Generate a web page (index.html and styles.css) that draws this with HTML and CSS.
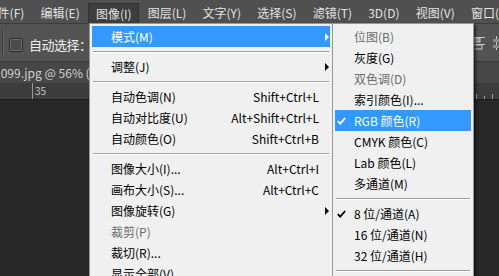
FILE: index.html
```html
<!DOCTYPE html>
<html lang="zh-CN">
<head>
  <meta charset="UTF-8">
  <meta name="viewport" content="width=device-width, initial-scale=1.0">
  <title>Photoshop - 图像菜单</title>
  <link rel="stylesheet" href="styles.css">
</head>
<body>
  <div class="ps">
    <div class="menubar">
      <span class="mb-item first">文件(F)</span>
      <span class="mb-item">编辑(E)</span>
      <span class="mb-item active">图像(I)</span>
      <span class="mb-item">图层(L)</span>
      <span class="mb-item">文字(Y)</span>
      <span class="mb-item">选择(S)</span>
      <span class="mb-item">滤镜(T)</span>
      <span class="mb-item">3D(D)</span>
      <span class="mb-item">视图(V)</span>
      <span class="mb-item">窗口(W)</span>
    </div>

    <div class="options">
      <span class="opt-sep"></span>
      <span class="check-box"></span>
      <span class="opt-label">自动选择：</span>
      <svg class="align-icons" width="30" height="16" viewBox="0 0 30 16">
        <rect x="0" y="1" width="16" height="1" fill="#c8c8c8"/>
        <rect x="4" y="2" width="7" height="4" fill="#8a8a8a"/>
        <rect x="4" y="2" width="7" height="4" fill="none" stroke="#c8c8c8" stroke-width="1"/>
        <rect x="0" y="8" width="16" height="1" fill="#c8c8c8"/>
        <rect x="4" y="9" width="9" height="4" fill="none" stroke="#c8c8c8" stroke-width="1"/>
        <rect x="27" y="0" width="1" height="14" fill="#c8c8c8"/>
        <rect x="24" y="3" width="6" height="3" fill="#8a8a8a"/>
        <rect x="24" y="9" width="6" height="3" fill="#8a8a8a"/>
      </svg>
    </div>

    <div class="doc-tab">
      <span class="doc-name">1099.jpg @ 56% (</span>
    </div>

    <div class="ruler">
      <svg class="ruler-ticks" width="499" height="16" viewBox="0 0 499 16">
        <rect x="32" y="0" width="1" height="16" fill="#9a9a9a"/>
        <rect x="476" y="11" width="1" height="5" fill="#9a9a9a"/>
        <rect x="484" y="13" width="1" height="3" fill="#9a9a9a"/>
        <rect x="492" y="11" width="1" height="5" fill="#9a9a9a"/>
      </svg>
      <span class="ruler-num">35</span>
    </div>

    <div class="pasteboard"></div>

    <ul class="menu main-menu">
      <li class="item hl"><span class="label">模式(M)</span><span class="arrow"></span></li>
      <li class="sep"></li>
      <li class="item"><span class="label">调整(J)</span><span class="arrow"></span></li>
      <li class="sep"></li>
      <li class="item"><span class="label">自动色调(N)</span><span class="key">Shift+Ctrl+L</span></li>
      <li class="item"><span class="label">自动对比度(U)</span><span class="key">Alt+Shift+Ctrl+L</span></li>
      <li class="item"><span class="label">自动颜色(O)</span><span class="key">Shift+Ctrl+B</span></li>
      <li class="sep"></li>
      <li class="item"><span class="label">图像大小(I)...</span><span class="key">Alt+Ctrl+I</span></li>
      <li class="item"><span class="label">画布大小(S)...</span><span class="key">Alt+Ctrl+C</span></li>
      <li class="item"><span class="label">图像旋转(G)</span><span class="arrow"></span></li>
      <li class="item off"><span class="label">裁剪(P)</span></li>
      <li class="item"><span class="label">裁切(R)...</span></li>
      <li class="item"><span class="label">显示全部(V)</span></li>
    </ul>

    <ul class="menu sub-menu">
      <li class="item off"><span class="label">位图(B)</span></li>
      <li class="item"><span class="label">灰度(G)</span></li>
      <li class="item off"><span class="label">双色调(D)</span></li>
      <li class="item"><span class="label">索引颜色(I)...</span></li>
      <li class="item hl">
        <svg class="tick" width="9" height="8" viewBox="0 0 9 8"><path d="M0.8 4.2 L3.2 6.6 L8.2 1" fill="none" stroke="currentColor" stroke-width="1.8"/></svg>
        <span class="label">RGB 颜色(R)</span>
      </li>
      <li class="item"><span class="label">CMYK 颜色(C)</span></li>
      <li class="item"><span class="label">Lab 颜色(L)</span></li>
      <li class="item"><span class="label">多通道(M)</span></li>
      <li class="sep"></li>
      <li class="item">
        <svg class="tick" width="9" height="8" viewBox="0 0 9 8"><path d="M0.8 4.2 L3.2 6.6 L8.2 1" fill="none" stroke="currentColor" stroke-width="1.8"/></svg>
        <span class="label">8 位/通道(A)</span>
      </li>
      <li class="item"><span class="label">16 位/通道(N)</span></li>
      <li class="item"><span class="label">32 位/通道(H)</span></li>
      <li class="sep"></li>
      <li class="item"><span class="label">颜色表(T)...</span></li>
    </ul>
  </div>
</body>
</html>
```

FILE: styles.css
```css
body {
  margin: 0;
  padding: 0;
  background: #282828;
  font-family: "Noto Sans CJK SC", "Noto Sans", sans-serif;
  font-size: 12px;
}

.ps {
  position: relative;
  width: 499px;
  height: 276px;
  overflow: hidden;
  display: flex;
  flex-direction: column;
}

/* top menu bar */
.menubar {
  height: 23px;
  padding-top: 3px;
  box-sizing: border-box;
  background: #505050;
  display: flex;
  gap: 1px;
  margin-left: -22px;
  white-space: nowrap;
}

.mb-item {
  height: 20px;
  line-height: 20px;
  padding: 0 7.6px;
  color: #e2e2e2;
  box-sizing: border-box;
}

.mb-item.active {
  background: #3e3e3e;
  border: 1px solid #333;
  border-bottom: none;
  line-height: 19px;
  padding: 0 6.6px;
}

/* options bar */
.options {
  height: 39px;
  background: #535353;
  border-top: 1px solid #3c3c3c;
  border-bottom: 1px solid #383838;
  box-sizing: border-box;
  display: flex;
  align-items: center;
}

.opt-sep {
  width: 1px;
  height: 24px;
  margin-left: 2px;
  background: #3a3a3a;
  border-right: 1px solid #666;
}

.check-box {
  width: 12px;
  height: 12px;
  margin: 4px 0 0 5px;
  border: 1px solid #2c2c2c;
  border-radius: 2px;
  background: #4b4b4b;
  box-shadow: inset 0 0 0 1px #6a6a6a;
}

.opt-label {
  margin: 3px 0 0 6px;
  color: #f0f0f0;
  font-size: 13px;
  letter-spacing: -0.5px;
}

.align-icons {
  margin: 2px 0 0 auto;
}

/* document tab */
.doc-tab {
  height: 21px;
  background: #474747;
  color: #d0d0d0;
  line-height: 21px;
  white-space: nowrap;
  overflow: hidden;
}

.doc-name {
  margin-left: -6px;
}

/* ruler */
.ruler {
  position: relative;
  height: 16px;
  background: #3c3c3c;
  border-bottom: 1px solid #1c1c1c;
}

.ruler-ticks {
  display: block;
}

.ruler-num {
  position: absolute;
  left: 35px;
  top: 2px;
  font-size: 10px;
  line-height: 12px;
  color: #c4c4c4;
}

.pasteboard {
  flex: 1;
  background: #282828;
}

/* dropdown menus */
.menu {
  position: absolute;
  top: 23px;
  margin: 0;
  padding: 2px;
  list-style: none;
  background: #f0f0f0;
  border: 1px solid #979797;
  box-shadow: 2px 2px 2px rgba(0, 0, 0, 0.55);
  color: #000;
}

.main-menu {
  left: 89px;
  width: 238px;
}

.sub-menu {
  left: 332px;
  width: 136px;
}

.item {
  height: 21px;
  line-height: 21px;
  display: grid;
  white-space: nowrap;
}

.main-menu .item {
  grid-template-columns: 1fr auto 11px;
  padding-left: 19px;
}

.sub-menu .item {
  grid-template-columns: 19px 1fr;
}

.main-menu .label {
  grid-column: 1;
}

.sub-menu .label {
  grid-column: 2;
}

.key {
  grid-column: 2;
}

.arrow {
  grid-column: 3;
  align-self: center;
  width: 0;
  height: 0;
  margin-left: 6px;
  border-left: 4px solid #000;
  border-top: 4px solid transparent;
  border-bottom: 4px solid transparent;
}

.tick {
  grid-column: 1;
  grid-row: 1;
  align-self: center;
  margin-left: 2px;
}

.item.hl {
  background: #3399ff;
  color: #fff;
}

.item.hl .arrow {
  border-left-color: #fff;
}

.item.off {
  color: #6d6d6d;
}

.sep {
  height: 0;
  margin: 4px 1px 3px;
  border-top: 1px solid #a0a0a0;
  border-bottom: 1px solid #fff;
}
```
